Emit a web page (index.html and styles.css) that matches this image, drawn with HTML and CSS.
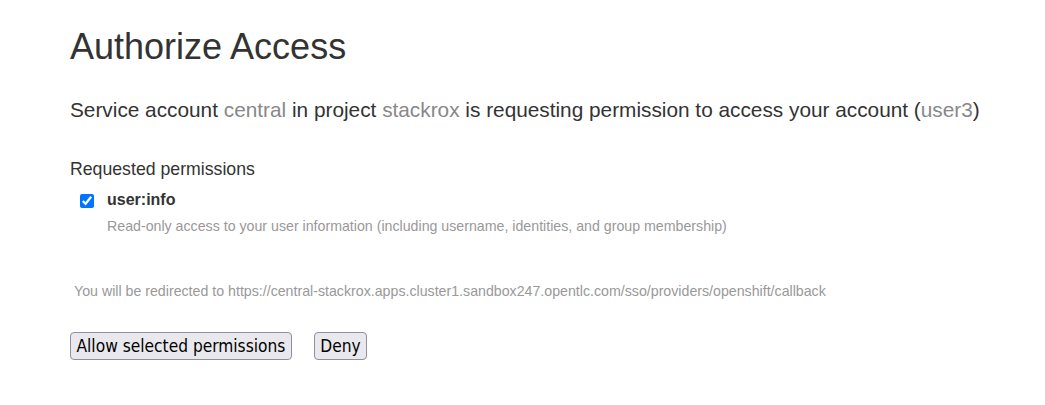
FILE: index.html
```html
<!DOCTYPE html>
<html>
<head>
<meta charset="utf-8">
<link rel="stylesheet" href="styles.css">
</head>
<body>
<div class="page">
  <h1 class="title">Authorize Access</h1>
  <p class="lead">Service account <span class="muted">central</span> in project <span class="muted">stackrox</span> is requesting permission to access your account (<span class="muted">user3</span>)</p>
  <form class="form">
    <h4 class="section">Requested permissions</h4>
    <div class="perm">
      <input type="checkbox" class="check" checked>
      <div class="perm-body">
        <div class="perm-name">user:info</div>
        <div class="perm-desc">Read-only access to your user information (including username, identities, and group membership)</div>
      </div>
    </div>
    <div class="redirect">You will be redirected to https://central-stackrox.apps.cluster1.sandbox247.opentlc.com/sso/providers/openshift/callback</div>
    <div class="actions">
      <button type="button" class="btn">Allow selected permissions</button>
      <button type="button" class="btn">Deny</button>
    </div>
  </form>
</div>
</body>
</html>
```
FILE: styles.css
```css
html, body {
  margin: 0;
  padding: 0;
  background: #fff;
}
body {
  font-family: "Liberation Sans", Arial, sans-serif;
  color: #333;
}
.page {
  padding: 22px 20px 0 70px;
}
.title {
  font-size: 36px;
  font-weight: 400;
  line-height: 50px;
  margin: 0;
  color: #333;
}
.lead {
  font-size: 20.8px;
  line-height: 28px;
  margin: 24px 0 0 0;
  white-space: nowrap;
}
.muted {
  color: #888;
}
.form {
  margin-top: 33px;
}
.section {
  font-size: 17.7px;
  font-weight: 400;
  line-height: 24px;
  margin: 0;
}
.perm {
  display: flex;
  align-items: flex-start;
  margin-top: 6px;
  padding-left: 10px;
}
.check {
  width: 14px;
  height: 14px;
  margin: 7px 13px 0 0;
  accent-color: #0075ff;
}
.perm-name {
  font-size: 16px;
  font-weight: 700;
  line-height: 26px;
}
.perm-desc {
  font-size: 14.2px;
  color: #999;
  line-height: 22px;
  margin-top: 2px;
}
.redirect {
  font-size: 14.2px;
  color: #999;
  margin-top: 44px;
  padding-left: 4px;
  line-height: 20px;
  white-space: nowrap;
}
.actions {
  display: flex;
  gap: 22px;
  margin-top: 31px;
}
.btn {
  font-family: "DejaVu Sans Condensed", "DejaVu Sans", Tahoma, sans-serif;
  font-size: 17.2px;
  color: #000;
  background: #e9e9ed;
  border: 1px solid #8f8f9d;
  border-radius: 4px;
  padding: 1px 5.5px 2px;
  height: 28px;
}
```
